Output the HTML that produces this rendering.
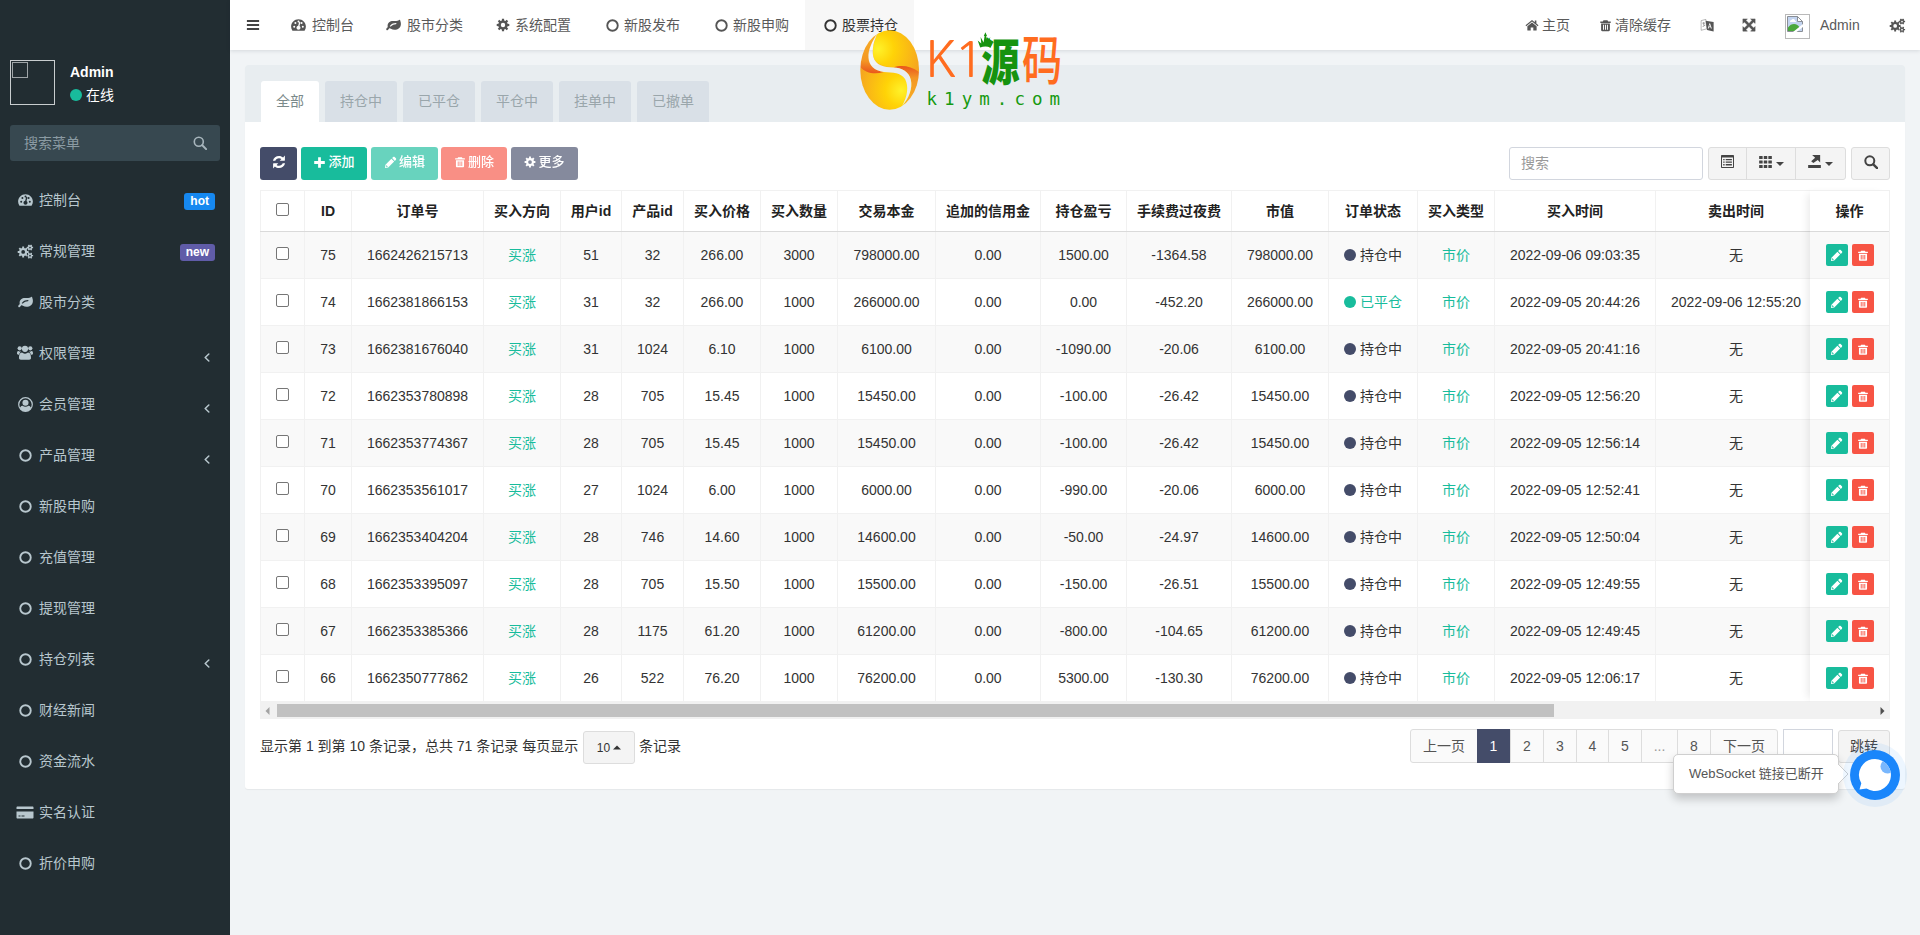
<!DOCTYPE html>
<html lang="zh-CN"><head><meta charset="utf-8"><title>股票持仓</title>
<style>
*{box-sizing:border-box;margin:0;padding:0}
html,body{width:1920px;height:935px;overflow:hidden}
body{position:relative;background:#f1f4f6;font-family:"Liberation Sans","Noto Sans CJK SC",sans-serif;font-size:14px;color:#333;line-height:20px}
svg{display:block}
.abs{position:absolute}
/* sidebar */
#sb{position:absolute;left:0;top:0;width:230px;height:935px;background:#222d32;color:#b8c7ce}
#sb .ava{position:absolute;left:10px;top:60px;width:45px;height:45px;border:1px solid #c9cdcf}
#sb .ava i{position:absolute;left:1px;top:1px;width:16px;height:16px;border:1px solid #9ea4a7;display:block}
#sb .uname{position:absolute;left:70px;top:62px;font-weight:bold;color:#fff;font-size:14px}
#sb .ustat{position:absolute;left:70px;top:85px;color:#fff;font-size:14px;display:flex;align-items:center}
#sb .ustat b{display:block;width:12px;height:12px;border-radius:6px;background:#18bc9c;margin-right:4px}
#sb .search{position:absolute;left:10px;top:125px;width:210px;height:36px;background:#374850;border-radius:3px;color:#8b9ba3;padding:8px 14px;font-size:14px}
#sb .search svg{position:absolute;right:13px;top:11px}
#sb .mi{position:absolute;left:0;width:230px;height:44px;font-size:14px;color:#b8c7ce}
#sb .mi .ico{position:absolute;left:15px;top:14px;width:20px;height:16px;display:flex;justify-content:center;align-items:center}
#sb .mi .tx{position:absolute;left:39px;top:12px;white-space:nowrap}
#sb .mi .bd{position:absolute;right:15px;top:15px;height:17px;line-height:17px;padding:0 6px;border-radius:3px;color:#fff;font-weight:bold;font-size:12px}
#sb .mi .ar{position:absolute;left:204px;top:22px}
/* header */
#hd{position:absolute;left:230px;top:0;width:1690px;height:50px;background:#fff;box-shadow:0 1px 4px rgba(0,21,41,.12)}
#hd .it{position:absolute;top:0;height:50px;display:flex;align-items:center;white-space:nowrap;color:#5a5a5a;font-size:14px}
#hd .it svg{margin-right:4px}
#hd .act{background:#f7f7f7;color:#333}
/* panel */
#pn{position:absolute;left:245px;top:65px;width:1660px;height:724px;background:#fff;border-radius:3px;box-shadow:0 1px 1px rgba(0,0,0,.05)}
#pn .ph{position:absolute;left:0;top:0;width:1660px;height:57px;background:#e8edf0;border-radius:3px 3px 0 0}
#pn .tab{position:absolute;top:16px;height:41px;line-height:41px;text-align:center;background:#d9e0e7;color:#9aa6ab;border-radius:3px 3px 0 0;font-size:14px}
#pn .tab.on{background:#fff;color:#7b8a8b}
#pn .btn{position:absolute;top:82px;height:33px;padding-bottom:3px;border-radius:3px;display:flex;align-items:center;justify-content:center;color:#fff;font-size:13px;white-space:nowrap}
#pn .btn span{margin-left:2px;font-weight:500}
.b-pri{background:#444c69}.b-suc{background:#18bc9c}.b-dan{background:#f75444}
.dis{opacity:.65}
#pn .sinp{position:absolute;left:1264px;top:82px;width:194px;height:33px;border:1px solid #d2d6de;border-radius:3px;padding:5px 11px;color:#999;font-size:14px;line-height:20px}
#pn .bgrp{position:absolute;left:1463px;top:82px;width:138px;height:33px;border:1px solid #ddd;border-radius:3px;background:#f4f4f4;display:flex}
#pn .bgrp>div{height:31px;padding-bottom:4px;border-right:1px solid #ddd;display:flex;align-items:center;justify-content:center}
#pn .bgrp>div svg+svg{margin-left:4px;margin-top:5px}
#pn .bsrch{padding-bottom:4px;position:absolute;left:1606px;top:82px;width:39px;height:33px;border:1px solid #ddd;border-radius:3px;background:#f4f4f4;display:flex;align-items:center;justify-content:center}
#pn .tw{position:absolute;left:15px;top:125px;width:1630px;height:512px;overflow:hidden}
table{border-collapse:collapse;table-layout:fixed;width:1556px;font-size:14px}
th,td{border:1px solid #f1f1f1;text-align:center;vertical-align:middle;white-space:nowrap;overflow:hidden;color:#333}
th{height:41px;font-weight:bold;border-bottom:1px solid #dadada;color:#222}
td{height:47px}
tbody tr:nth-child(odd) td{background:#f9f9f9}
td.g{color:#18bc9c}
.cb{display:inline-block;width:13px;height:13px;border:1px solid #767676;border-radius:2px;background:#fff;vertical-align:middle;margin-top:-5px}
.st{display:inline-flex;align-items:center}
.st b{display:block;width:12px;height:12px;border-radius:6px;margin-right:4px}
#pn .fx{position:absolute;left:1565px;top:125px;width:80px;height:512px;background:#fff;box-shadow:-6px 0 8px -4px rgba(0,0,0,.09);border-right:1px solid #f0f0f0}
#pn .fx .fh{height:42px;line-height:41px;text-align:center;font-weight:bold;border-top:1px solid #f0f0f0;border-bottom:1px solid #dadada;color:#222;padding-top:0}
#pn .fx .fr{height:47px;border-bottom:1px solid #f0f0f0;display:flex;align-items:center;justify-content:center}
#pn .fx .fr.od{background:#f9f9f9}
.ob{display:flex;width:22px;height:22px;border-radius:2px;align-items:center;justify-content:center;margin:0 2px}
#pn .hs{position:absolute;left:15px;top:637px;width:1630px;height:17px;background:#f1f1f1}
#pn .hs .thumb{position:absolute;left:17px;top:2px;width:1277px;height:13px;background:#c1c1c1}
#pn .pinfo{position:absolute;left:15px;top:671px;font-size:14px;line-height:20px;white-space:nowrap;color:#333}
#pn .psize{position:absolute;left:338px;top:666px;width:52px;height:33px;border:1px solid #ddd;border-radius:3px;background:#f4f4f4;display:flex;align-items:center;justify-content:center;font-size:12px;color:#333}
#pn .psize svg{margin-left:3px}
#pn .pgs{position:absolute;left:1165px;top:664px;height:34px;width:368px}
#pn .pg{position:absolute;top:0;height:34px;line-height:32px;border:1px solid #ddd;background:#fafafa;color:#555;text-align:center;font-size:14px}
#pn .pg.on{background:#444c69;border-color:#444c69;color:#fff;z-index:2}
#pn .pg.dd{color:#999}
#pn .jinp{position:absolute;left:1538px;top:664px;width:50px;height:34px;border:1px solid #d2d6de;background:#fff}
#pn .jbtn{position:absolute;left:1593px;top:665px;width:52px;height:33px;border:1px solid #ddd;border-radius:3px;background:#f4f4f4;text-align:center;line-height:31px;font-size:14px;color:#444}

</style></head>
<body>
<div id="sb">
<div class="ava"><i></i></div>
<div class="uname">Admin</div>
<div class="ustat"><b></b>在线</div>
<div class="search">搜索菜单<svg width="14" height="14" viewBox="0 0 14 14" style=""><g fill="none" stroke="#a7b5bc" stroke-width="1.6"><circle cx="5.800" cy="5.800" r="4.500"/><path stroke-linecap="round" d="M9.300 9.300l3.800 3.800" stroke-width="2.0"/></g></svg></div>
<div class="mi" style="top:178px"><span class="ico"><svg width="15" height="12" viewBox="0.500 1.700 15 11.900" style=""><path fill="#b8c7ce" fill-rule="evenodd" d="M8 1.8C3.9 1.8 .6 5.1 .6 9.2c0 1.4.4 2.8 1.2 4 .1.2.3.3.5.3h11.4c.2 0 .4-.1.5-.3.8-1.2 1.2-2.6 1.2-4 0-4.100-3.300-7.400-7.400-7.400zM3.700 10.300a1 1 0 1 1 0-2 1 1 0 0 1 0 2zM4.900 6.600a1 1 0 1 1 0-2 1 1 0 0 1 0 2zM8 5.200a1 1 0 1 1 0-2 1 1 0 0 1 0 2zM11.100 6.600a1 1 0 1 1 0-2 1 1 0 0 1 0 2zM12.300 10.300a1 1 0 1 1 0-2 1 1 0 0 1 0 2zM9.900 5.400l-.9 3.300c.6.3 1 .9 1 1.600 0 1.100-.9 2-2 2s-2-.9-2-2c0-1 .7-1.800 1.700-2l.9-3.300c.1-.3.400-.5.700-.4.400.1.600.4.500.8z"/></svg></span><span class="tx">控制台</span><span class="bd" style="background:#1688f0">hot</span></div>
<div class="mi" style="top:229px"><span class="ico"><svg width="17" height="15" viewBox="0 0 17 16" style=""><path fill="#b8c7ce" fill-rule="evenodd" d="M10.27 7.44 L11.81 7.50 L11.81 9.50 L10.27 9.56 L9.77 10.77 L10.82 11.90 L9.40 13.32 L8.27 12.27 L7.06 12.77 L7.00 14.31 L5.00 14.31 L4.94 12.77 L3.73 12.27 L2.60 13.32 L1.18 11.90 L2.23 10.77 L1.73 9.56 L0.19 9.50 L0.19 7.50 L1.73 7.44 L2.23 6.23 L1.18 5.10 L2.60 3.68 L3.73 4.73 L4.94 4.23 L5.00 2.69 L7.00 2.69 L7.06 4.23 L8.27 4.73 L9.40 3.68 L10.82 5.10 L9.77 6.23Z M8.00 8.50 A2.0 2.0 0 1 0 4.00 8.50 A2.0 2.0 0 1 0 8.00 8.50Z M15.57 3.03 L16.61 3.03 L16.61 4.57 L15.57 4.57 L15.10 5.39 L15.62 6.29 L14.29 7.05 L13.77 6.15 L12.83 6.15 L12.31 7.05 L10.98 6.29 L11.50 5.39 L11.03 4.57 L9.99 4.57 L9.99 3.03 L11.03 3.03 L11.50 2.21 L10.98 1.31 L12.31 0.55 L12.83 1.45 L13.77 1.45 L14.29 0.55 L15.62 1.31 L15.10 2.21Z M14.20 3.80 A0.9 0.9 0 1 0 12.40 3.80 A0.9 0.9 0 1 0 14.20 3.80Z M15.57 11.63 L16.61 11.63 L16.61 13.17 L15.57 13.17 L15.10 13.99 L15.62 14.89 L14.29 15.65 L13.77 14.75 L12.83 14.75 L12.31 15.65 L10.98 14.89 L11.50 13.99 L11.03 13.17 L9.99 13.17 L9.99 11.63 L11.03 11.63 L11.50 10.81 L10.98 9.91 L12.31 9.15 L12.83 10.05 L13.77 10.05 L14.29 9.15 L15.62 9.91 L15.10 10.81Z M14.20 12.40 A0.9 0.9 0 1 0 12.40 12.40 A0.9 0.9 0 1 0 14.20 12.40Z"/></svg></span><span class="tx">常规管理</span><span class="bd" style="background:#605ca8">new</span></div>
<div class="mi" style="top:280px"><span class="ico"><svg width="15" height="12" viewBox="0 1.800 16 12" style=""><path fill="#b8c7ce" fill-rule="evenodd" d="M15.300 3.500c.4 1 .6 2.100.6 3.100 0 3.800-3.200 6.300-6.900 6.300-1.400 0-2.600-.5-3.800-1.100-.4-.2-.9-.5-1.300-.5-.5 0-1 .8-1.400 1.300-.3.400-.6.700-1.100.7-.7 0-1.200-.6-1.200-1.100 0-.8 1.100-1.700 1.700-2.100-.1-.4-.2-.9-.2-1.400 0-3.200 2.600-5.200 5.600-5.200 1.200 0 2.400.1 3.600.1 1 0 2-.2 2.800-.8.300-.2.500-.5.900-.5.400 0 .6.800.7 1.200zM11.200 6.300c0-.3-.3-.6-.6-.6-2.300 0-4.300.9-6 2.500-.3.200-.5.400-.5.700 0 .3.300.6.600.6.300 0 .5-.2.700-.4 1.400-1.300 3.100-2.200 5.100-2.200.4 0 .7-.3.7-.6z"/></svg></span><span class="tx">股市分类</span></div>
<div class="mi" style="top:331px"><span class="ico" style="top:13px"><svg width="16" height="15" viewBox="0 0 16 15" style=""><g fill="#b8c7ce"><circle cx="8" cy="3.800" r="3.100"/><circle cx="2.700" cy="3.300" r="2.100"/><circle cx="13.300" cy="3.300" r="2.100"/><path d="M3.800 14.700c-1.100 0-1.800-.7-1.800-1.700 0-2.200.500-5.400 3-5.400.3 0 1.300 1.100 3 1.100s2.700-1.100 3-1.100c2.500 0 3 3.200 3 5.400 0 1-.7 1.700-1.800 1.700z"/><path d="M3.900 6.700c-.9.500-1.500 1.600-1.700 3.100H1.400C.5 9.800 0 9.400 0 8.600c0-1.200.300-2.500 1.200-2.500.3 0 .8.600 1.800.6.300 0 .6 0 .9-.100z"/><path d="M12.100 6.700c.9.500 1.500 1.600 1.700 3.100h.8c.9 0 1.400-.4 1.400-1.200 0-1.200-.3-2.500-1.200-2.500-.3 0-.8.600-1.800.6-.3 0-.6 0-.9-.100z"/></g></svg></span><span class="tx">权限管理</span><span class="ar"><svg width="6" height="9" viewBox="0 0 6 9" style=""><path fill="none" stroke="#b8c7ce" stroke-width="1.500" stroke-linecap="round" stroke-linejoin="round" d="M4.800 1L1.200 4.500 4.800 8"/></svg></span></div>
<div class="mi" style="top:382px"><span class="ico"><svg width="15" height="15" viewBox="0.600 0.600 14.800 14.800" style=""><clipPath id="ucp"><circle cx="8" cy="8" r="6.700"/></clipPath><circle cx="8" cy="8" r="6.700" fill="none" stroke="#b8c7ce" stroke-width="1.200"/><circle cx="8" cy="6.200" r="3" fill="#b8c7ce"/><path clip-path="url(#ucp)" fill="#b8c7ce" d="M1.800 15c0-3.800 1.600-5.700 3.400-5.700.7.600 1.700 1 2.800 1s2.100-.4 2.800-1c1.800 0 3.400 1.900 3.400 5.700z"/></svg></span><span class="tx">会员管理</span><span class="ar"><svg width="6" height="9" viewBox="0 0 6 9" style=""><path fill="none" stroke="#b8c7ce" stroke-width="1.500" stroke-linecap="round" stroke-linejoin="round" d="M4.800 1L1.200 4.500 4.800 8"/></svg></span></div>
<div class="mi" style="top:433px"><span class="ico"><svg width="15" height="15" viewBox="0 0 16 16" style=""><circle cx="8" cy="8" r="5.6" fill="none" stroke="#b8c7ce" stroke-width="2"/></svg></span><span class="tx">产品管理</span><span class="ar"><svg width="6" height="9" viewBox="0 0 6 9" style=""><path fill="none" stroke="#b8c7ce" stroke-width="1.500" stroke-linecap="round" stroke-linejoin="round" d="M4.800 1L1.200 4.500 4.800 8"/></svg></span></div>
<div class="mi" style="top:484px"><span class="ico"><svg width="15" height="15" viewBox="0 0 16 16" style=""><circle cx="8" cy="8" r="5.6" fill="none" stroke="#b8c7ce" stroke-width="2"/></svg></span><span class="tx">新股申购</span></div>
<div class="mi" style="top:535px"><span class="ico"><svg width="15" height="15" viewBox="0 0 16 16" style=""><circle cx="8" cy="8" r="5.6" fill="none" stroke="#b8c7ce" stroke-width="2"/></svg></span><span class="tx">充值管理</span></div>
<div class="mi" style="top:586px"><span class="ico"><svg width="15" height="15" viewBox="0 0 16 16" style=""><circle cx="8" cy="8" r="5.6" fill="none" stroke="#b8c7ce" stroke-width="2"/></svg></span><span class="tx">提现管理</span></div>
<div class="mi" style="top:637px"><span class="ico"><svg width="15" height="15" viewBox="0 0 16 16" style=""><circle cx="8" cy="8" r="5.6" fill="none" stroke="#b8c7ce" stroke-width="2"/></svg></span><span class="tx">持仓列表</span><span class="ar"><svg width="6" height="9" viewBox="0 0 6 9" style=""><path fill="none" stroke="#b8c7ce" stroke-width="1.500" stroke-linecap="round" stroke-linejoin="round" d="M4.800 1L1.200 4.500 4.800 8"/></svg></span></div>
<div class="mi" style="top:688px"><span class="ico"><svg width="15" height="15" viewBox="0 0 16 16" style=""><circle cx="8" cy="8" r="5.6" fill="none" stroke="#b8c7ce" stroke-width="2"/></svg></span><span class="tx">财经新闻</span></div>
<div class="mi" style="top:739px"><span class="ico"><svg width="15" height="15" viewBox="0 0 16 16" style=""><circle cx="8" cy="8" r="5.6" fill="none" stroke="#b8c7ce" stroke-width="2"/></svg></span><span class="tx">资金流水</span></div>
<div class="mi" style="top:790px"><span class="ico"><svg width="20" height="15" viewBox="0 0 18 15" style=""><path fill="#b8c7ce" fill-rule="evenodd" d="M1.500 1.500h15c.6 0 1 .4 1 1V4H.5V2.500c0-.6.400-1 1-1zM.5 6.500h17v6c0 .6-.4 1-1 1h-15c-.6 0-1-.4-1-1zM2.500 10.500v1h2v-1z M5.500 10.500v1h3v-1z"/></svg></span><span class="tx">实名认证</span></div>
<div class="mi" style="top:841px"><span class="ico"><svg width="15" height="15" viewBox="0 0 16 16" style=""><circle cx="8" cy="8" r="5.6" fill="none" stroke="#b8c7ce" stroke-width="2"/></svg></span><span class="tx">折价申购</span></div>
</div>
<div id="hd">
<div class="it" style="left:16px"><svg width="14" height="14" viewBox="0 0 16 16" style=""><g fill="#444"><rect x="1" y="2.3" width="14" height="2.3" rx=".3"/><rect x="1" y="6.85" width="14" height="2.3" rx=".3"/><rect x="1" y="11.4" width="14" height="2.3" rx=".3"/></g></svg></div>
<div class="it" style="left:61px"><svg width="15" height="12" viewBox="0.500 1.700 15 11.900" style=""><path fill="#555" fill-rule="evenodd" d="M8 1.8C3.9 1.8 .6 5.1 .6 9.2c0 1.4.4 2.8 1.2 4 .1.2.3.3.5.3h11.4c.2 0 .4-.1.5-.3.8-1.2 1.2-2.6 1.2-4 0-4.100-3.300-7.400-7.400-7.400zM3.700 10.300a1 1 0 1 1 0-2 1 1 0 0 1 0 2zM4.900 6.600a1 1 0 1 1 0-2 1 1 0 0 1 0 2zM8 5.200a1 1 0 1 1 0-2 1 1 0 0 1 0 2zM11.100 6.600a1 1 0 1 1 0-2 1 1 0 0 1 0 2zM12.300 10.300a1 1 0 1 1 0-2 1 1 0 0 1 0 2zM9.900 5.400l-.9 3.300c.6.3 1 .9 1 1.600 0 1.100-.9 2-2 2s-2-.9-2-2c0-1 .7-1.800 1.700-2l.9-3.300c.1-.3.400-.5.700-.4.400.1.600.4.500.8z"/></svg><span style="margin-left:2px">控制台</span></div>
<div class="it" style="left:156px"><svg width="15" height="12" viewBox="0 1.800 16 12" style=""><path fill="#555" fill-rule="evenodd" d="M15.300 3.500c.4 1 .6 2.100.6 3.100 0 3.800-3.200 6.300-6.900 6.300-1.400 0-2.600-.5-3.800-1.100-.4-.2-.9-.5-1.300-.5-.5 0-1 .8-1.400 1.300-.3.400-.6.700-1.100.7-.7 0-1.200-.6-1.200-1.100 0-.8 1.100-1.700 1.700-2.100-.1-.4-.2-.9-.2-1.400 0-3.200 2.600-5.200 5.600-5.200 1.200 0 2.400.1 3.600.1 1 0 2-.2 2.800-.8.300-.2.500-.5.900-.5.400 0 .6.800.7 1.200zM11.200 6.300c0-.3-.3-.6-.6-.6-2.300 0-4.300.9-6 2.500-.3.200-.5.400-.5.700 0 .3.300.6.600.6.300 0 .5-.2.700-.4 1.400-1.300 3.100-2.200 5.100-2.200.4 0 .7-.3.7-.6z"/></svg><span style="margin-left:2px">股市分类</span></div>
<div class="it" style="left:266px"><svg width="14" height="14" viewBox="0 0 16 16" style=""><path fill="#555" fill-rule="evenodd" d="M13.24 6.70 L15.19 6.76 L15.19 9.24 L13.24 9.30 L12.63 10.79 L13.96 12.21 L12.21 13.96 L10.79 12.63 L9.30 13.24 L9.24 15.19 L6.76 15.19 L6.70 13.24 L5.21 12.63 L3.79 13.96 L2.04 12.21 L3.37 10.79 L2.76 9.30 L0.81 9.24 L0.81 6.76 L2.76 6.70 L3.37 5.21 L2.04 3.79 L3.79 2.04 L5.21 3.37 L6.70 2.76 L6.76 0.81 L9.24 0.81 L9.30 2.76 L10.79 3.37 L12.21 2.04 L13.96 3.79 L12.63 5.21Z M10.50 8.00 A2.5 2.5 0 1 0 5.50 8.00 A2.5 2.5 0 1 0 10.50 8.00Z"/></svg><span style="margin-left:1px">系统配置</span></div>
<div class="it" style="left:375px"><svg width="15" height="15" viewBox="0 0 16 16" style=""><circle cx="8" cy="8" r="5.6" fill="none" stroke="#555" stroke-width="2"/></svg><span style="margin-left:0px">新股发布</span></div>
<div class="it" style="left:484px"><svg width="15" height="15" viewBox="0 0 16 16" style=""><circle cx="8" cy="8" r="5.6" fill="none" stroke="#555" stroke-width="2"/></svg><span style="margin-left:0px">新股申购</span></div>
<div class="it act" style="left:575px;width:109px;padding-left:18px"><svg width="15" height="15" viewBox="0 0 16 16" style=""><circle cx="8" cy="8" r="5.6" fill="none" stroke="#333" stroke-width="2"/></svg>股票持仓</div>
<div class="it" style="left:1295px"><svg width="14" height="14" viewBox="0 0 16 16" style=""><path fill="#555" d="M8 2.200L.6 8.300l.8 1 6.600-5.400 6.600 5.400.8-1-2.400-2V2.800h-1.800v2z M8 5.100l-5.300 4.400v4.400c0 .3.200.5.500.5h3.300v-3.600h3v3.600h3.300c.3 0 .5-.2.500-.5V9.500z"/></svg><span style="margin-left:-1px">主页</span></div>
<div class="it" style="left:1369px"><svg width="13" height="15" viewBox="0 0 16 16" style=""><path fill="#555" fill-rule="evenodd" d="M5.500 1.500h5l.8 1.500h2.700c.3 0 .5.200.5.500v.8c0 .3-.2.500-.5.500H2c-.3 0-.5-.2-.5-.5v-.8c0-.3.200-.5.500-.5h2.700zM2.600 5.600h10.800v8c0 .8-.6 1.400-1.400 1.400H4c-.8 0-1.400-.6-1.400-1.400zM5 7.200v6h1.200v-6z M7.400 7.200v6h1.200v-6z M9.800 7.200v6H11v-6z"/></svg><span style="margin-left:-1px">清除缓存</span></div>
<div class="it" style="left:1470px"><svg width="15" height="15" viewBox="0 0 16 16" style=""><path fill="none" stroke="#555" stroke-width=".8" opacity=".55" d="M1.200 2.800l5-1.300 1.200 10-6.200 1.600z"/><path fill="#555" d="M6 2.800l8.500 1.400v10.300L7.500 12.800z"/><path fill="#fff" d="M10.700 5.600l1.900 5.600h-1l-.4-1.300H9.600l-.4 1.300h-.9l1.800-5.600zm-.3 1.400l-.6 2.100h1.200z"/><path fill="#555" opacity=".7" d="M2.500 5h3v.8h-3z M3.600 4.200h.8v3.600h-.8z M2.600 9l2.800-2 .4.600-2.800 2z"/></svg></div>
<div class="it" style="left:1512px"><svg width="14" height="14" viewBox="0 0 16 16" style=""><path fill="#555" stroke="#555" stroke-width=".5" stroke-linejoin="round" d="M1 1h5.200L4.500 2.700 8 6.200l3.500-3.500L9.800 1H15v5.200l-1.700-1.700L9.800 8l3.500 3.500L15 9.800V15H9.800l1.700-1.700L8 9.800l-3.500 3.500L6.200 15H1V9.800l1.700 1.700L6.200 8 2.700 4.500 1 6.200z"/></svg></div>
<div class="abs" style="left:1555px;top:14px;width:25px;height:25px;border:1px solid #b9b9b9"></div>
<svg width="16" height="16" viewBox="0 0 16 16" class="abs" style="left:1557px;top:16px"><path d="M.5.5h10l5 5v10H.5z" fill="#c3d4f0" stroke="#8a8f96"/><path d="M10.500.5v5h5z" fill="#fff" stroke="#8a8f96" stroke-linejoin="round"/><path d="M3 5.500c0-.8.700-1.500 1.500-1.500.3-.7 1-1 1.700-1 1 0 1.800.700 1.800 1.700.6.100 1 .5 1 1 0 .2 0 .3-.1.400H3.200C3.100 5.900 3 5.700 3 5.500z" fill="#fff"/><path d="M1 15v-3.500C2.500 9 5 8 7 8c2.500 0 4.500 1.500 5.500 3.500L9 15z" fill="#4aa83c"/><path d="M6 16L16 8v3l-6.500 5z" fill="#fff"/></svg>
<div class="it" style="left:1590px">Admin</div>
<div class="it" style="left:1659px"><svg width="17" height="15" viewBox="0 0 17 16" style=""><path fill="#555" fill-rule="evenodd" d="M10.27 7.44 L11.81 7.50 L11.81 9.50 L10.27 9.56 L9.77 10.77 L10.82 11.90 L9.40 13.32 L8.27 12.27 L7.06 12.77 L7.00 14.31 L5.00 14.31 L4.94 12.77 L3.73 12.27 L2.60 13.32 L1.18 11.90 L2.23 10.77 L1.73 9.56 L0.19 9.50 L0.19 7.50 L1.73 7.44 L2.23 6.23 L1.18 5.10 L2.60 3.68 L3.73 4.73 L4.94 4.23 L5.00 2.69 L7.00 2.69 L7.06 4.23 L8.27 4.73 L9.40 3.68 L10.82 5.10 L9.77 6.23Z M8.00 8.50 A2.0 2.0 0 1 0 4.00 8.50 A2.0 2.0 0 1 0 8.00 8.50Z M15.57 3.03 L16.61 3.03 L16.61 4.57 L15.57 4.57 L15.10 5.39 L15.62 6.29 L14.29 7.05 L13.77 6.15 L12.83 6.15 L12.31 7.05 L10.98 6.29 L11.50 5.39 L11.03 4.57 L9.99 4.57 L9.99 3.03 L11.03 3.03 L11.50 2.21 L10.98 1.31 L12.31 0.55 L12.83 1.45 L13.77 1.45 L14.29 0.55 L15.62 1.31 L15.10 2.21Z M14.20 3.80 A0.9 0.9 0 1 0 12.40 3.80 A0.9 0.9 0 1 0 14.20 3.80Z M15.57 11.63 L16.61 11.63 L16.61 13.17 L15.57 13.17 L15.10 13.99 L15.62 14.89 L14.29 15.65 L13.77 14.75 L12.83 14.75 L12.31 15.65 L10.98 14.89 L11.50 13.99 L11.03 13.17 L9.99 13.17 L9.99 11.63 L11.03 11.63 L11.50 10.81 L10.98 9.91 L12.31 9.15 L12.83 10.05 L13.77 10.05 L14.29 9.15 L15.62 9.91 L15.10 10.81Z M14.20 12.40 A0.9 0.9 0 1 0 12.40 12.40 A0.9 0.9 0 1 0 14.20 12.40Z"/></svg></div>
</div>
<div id="pn">
<div class="ph">
<div class="tab on" style="left:16px;width:58px">全部</div>
<div class="tab" style="left:80px;width:72px">持仓中</div>
<div class="tab" style="left:158px;width:72px">已平仓</div>
<div class="tab" style="left:236px;width:72px">平仓中</div>
<div class="tab" style="left:314px;width:72px">挂单中</div>
<div class="tab" style="left:392px;width:72px">已撤单</div>
</div>
<div class="btn b-pri" style="left:15px;width:37px"><svg width="16" height="16" viewBox="0 0 16 16" style=""><path fill="#fff" d="M13.900 1.600v4.700c0 .3-.2.500-.5.500H8.700l1.700-1.700C9.800 4.500 8.900 4.200 8 4.200c-1.700 0-3.100 1-3.700 2.500H1.900C2.600 3.900 5 1.900 8 1.900c1.600 0 3 .6 4.100 1.600zM2.100 14.400V9.700c0-.3.200-.5.500-.5h4.700L5.600 10.900c.6.600 1.500.9 2.400.9 1.700 0 3.100-1 3.700-2.500h2.400c-.7 2.800-3.100 4.800-6.100 4.800-1.600 0-3-.6-4.100-1.600z"/></svg></div>
<div class="btn b-suc" style="left:56px;width:66px"><svg width="13" height="13" viewBox="0 0 16 16" style=""><path fill="#fff" d="M6.300 1.500h3.400v4.800h4.800v3.400H9.700v4.800H6.300V9.700H1.500V6.300h4.800z"/></svg><span>添加</span></div>
<div class="btn b-suc dis" style="left:126px;width:67px"><svg width="13" height="13" viewBox="0 0 16 16" style=""><path fill="#fff" fill-rule="evenodd" d="M11.300 1.300c.5-.5 1.300-.5 1.800 0l1.600 1.600c.5.500.5 1.300 0 1.800l-1.300 1.300-3.400-3.400z M9.100 3.500l3.400 3.400-7.300 7.300-4 .6.600-4z M2.900 11.200l-.3 1.800.4.400 1.800-.3z"/></svg><span>编辑</span></div>
<div class="btn b-dan dis" style="left:196px;width:66px"><svg width="12" height="14" viewBox="0 0 16 16" style=""><path fill="#fff" fill-rule="evenodd" d="M5.500 1.500h5l.8 1.500h2.700c.3 0 .5.200.5.500v.8c0 .3-.2.500-.5.500H2c-.3 0-.5-.2-.5-.5v-.8c0-.3.200-.5.500-.5h2.700zM2.600 5.600h10.800v8c0 .8-.6 1.400-1.400 1.400H4c-.8 0-1.400-.6-1.400-1.400zM5 7.200v6h1.200v-6z M7.400 7.200v6h1.200v-6z M9.800 7.200v6H11v-6z"/></svg><span>删除</span></div>
<div class="btn b-pri dis" style="left:266px;width:67px"><svg width="12" height="12" viewBox="0 0 16 16" style=""><path fill="#fff" fill-rule="evenodd" d="M13.24 6.70 L15.19 6.76 L15.19 9.24 L13.24 9.30 L12.63 10.79 L13.96 12.21 L12.21 13.96 L10.79 12.63 L9.30 13.24 L9.24 15.19 L6.76 15.19 L6.70 13.24 L5.21 12.63 L3.79 13.96 L2.04 12.21 L3.37 10.79 L2.76 9.30 L0.81 9.24 L0.81 6.76 L2.76 6.70 L3.37 5.21 L2.04 3.79 L3.79 2.04 L5.21 3.37 L6.70 2.76 L6.76 0.81 L9.24 0.81 L9.30 2.76 L10.79 3.37 L12.21 2.04 L13.96 3.79 L12.63 5.21Z M10.50 8.00 A2.5 2.5 0 1 0 5.50 8.00 A2.5 2.5 0 1 0 10.50 8.00Z"/></svg><span>更多</span></div>
<div class="sinp">搜索</div>
<div class="bgrp"><div style="width:38px"><svg width="13" height="13" viewBox="0 0 13 13" style=""><path fill="#444" fill-rule="evenodd" d="M.8 0h11.400c.5 0 .8.300.8.800v11.400c0 .5-.3.800-.8.800H.8c-.5 0-.8-.3-.8-.8V.8C0 .3.300 0 .8 0zM1 2.600v9.400h11V2.600zM2.200 3.900h1.400v1.300H2.200z M4.700 3.900h6.200v1.300H4.700zM2.200 6.500h1.400v1.300H2.200z M4.700 6.500h6.200v1.300H4.700zM2.200 9.100h1.400v1.300H2.200z M4.700 9.100h6.200v1.300H4.700z"/></svg></div><div style="width:49px"><svg width="13" height="12" viewBox="0 0 12.7 12" style=""><g fill="#444"><rect x="0.0" y="0.0" width="3.500" height="3" rx=".3"/><rect x="4.6" y="0.0" width="3.500" height="3" rx=".3"/><rect x="9.2" y="0.0" width="3.500" height="3" rx=".3"/><rect x="0.0" y="4.5" width="3.500" height="3" rx=".3"/><rect x="4.6" y="4.5" width="3.500" height="3" rx=".3"/><rect x="9.2" y="4.5" width="3.500" height="3" rx=".3"/><rect x="0.0" y="9.0" width="3.500" height="3" rx=".3"/><rect x="4.6" y="9.0" width="3.500" height="3" rx=".3"/><rect x="9.2" y="9.0" width="3.500" height="3" rx=".3"/></g></svg><svg width="8" height="4" viewBox="0 0 8 4" style=""><path fill="#444" d="M0 0h8L4 4z"/></svg></div><div style="width:49px;border-right:0"><svg width="13" height="13" viewBox="0 0 12.7 13" style=""><path fill="#444" d="M0 10h12.700v3H0zM4 0h8v7.500L9.600 5.100 5.200 7.900 3 6.200 7 2.700z"/></svg><svg width="8" height="4" viewBox="0 0 8 4" style=""><path fill="#444" d="M0 0h8L4 4z"/></svg></div></div>
<div class="bsrch"><svg width="14" height="14" viewBox="0 0 14 14" style=""><g fill="none" stroke="#444" stroke-width="2"><circle cx="5.800" cy="5.800" r="4.500"/><path stroke-linecap="round" d="M9.300 9.300l3.800 3.800" stroke-width="2.4"/></g></svg></div>
<div class="tw"><table><colgroup>
<col style="width:44px">
<col style="width:47px">
<col style="width:132px">
<col style="width:77px">
<col style="width:61px">
<col style="width:62px">
<col style="width:77px">
<col style="width:77px">
<col style="width:98px">
<col style="width:105px">
<col style="width:86px">
<col style="width:105px">
<col style="width:97px">
<col style="width:89px">
<col style="width:77px">
<col style="width:161px">
<col style="width:161px">
</colgroup><thead><tr>
<th><i class="cb" style="margin-top:-5px"></i></th>
<th>ID</th>
<th>订单号</th>
<th>买入方向</th>
<th>用户id</th>
<th>产品id</th>
<th>买入价格</th>
<th>买入数量</th>
<th>交易本金</th>
<th>追加的信用金</th>
<th>持仓盈亏</th>
<th>手续费过夜费</th>
<th>市值</th>
<th>订单状态</th>
<th>买入类型</th>
<th>买入时间</th>
<th>卖出时间</th>
</tr></thead><tbody>
<tr><td><i class="cb"></i></td><td>75</td><td>1662426215713</td><td class="g">买涨</td><td>51</td><td>32</td><td>266.00</td><td>3000</td><td>798000.00</td><td>0.00</td><td>1500.00</td><td>-1364.58</td><td>798000.00</td><td><span class="st"><b style="background:#444c69"></b>持仓中</span></td><td class="g">市价</td><td>2022-09-06 09:03:35</td><td>无</td></tr>
<tr><td><i class="cb"></i></td><td>74</td><td>1662381866153</td><td class="g">买涨</td><td>31</td><td>32</td><td>266.00</td><td>1000</td><td>266000.00</td><td>0.00</td><td>0.00</td><td>-452.20</td><td>266000.00</td><td><span class="st" style="color:#18bc9c"><b style="background:#18bc9c"></b>已平仓</span></td><td class="g">市价</td><td>2022-09-05 20:44:26</td><td>2022-09-06 12:55:20</td></tr>
<tr><td><i class="cb"></i></td><td>73</td><td>1662381676040</td><td class="g">买涨</td><td>31</td><td>1024</td><td>6.10</td><td>1000</td><td>6100.00</td><td>0.00</td><td>-1090.00</td><td>-20.06</td><td>6100.00</td><td><span class="st"><b style="background:#444c69"></b>持仓中</span></td><td class="g">市价</td><td>2022-09-05 20:41:16</td><td>无</td></tr>
<tr><td><i class="cb"></i></td><td>72</td><td>1662353780898</td><td class="g">买涨</td><td>28</td><td>705</td><td>15.45</td><td>1000</td><td>15450.00</td><td>0.00</td><td>-100.00</td><td>-26.42</td><td>15450.00</td><td><span class="st"><b style="background:#444c69"></b>持仓中</span></td><td class="g">市价</td><td>2022-09-05 12:56:20</td><td>无</td></tr>
<tr><td><i class="cb"></i></td><td>71</td><td>1662353774367</td><td class="g">买涨</td><td>28</td><td>705</td><td>15.45</td><td>1000</td><td>15450.00</td><td>0.00</td><td>-100.00</td><td>-26.42</td><td>15450.00</td><td><span class="st"><b style="background:#444c69"></b>持仓中</span></td><td class="g">市价</td><td>2022-09-05 12:56:14</td><td>无</td></tr>
<tr><td><i class="cb"></i></td><td>70</td><td>1662353561017</td><td class="g">买涨</td><td>27</td><td>1024</td><td>6.00</td><td>1000</td><td>6000.00</td><td>0.00</td><td>-990.00</td><td>-20.06</td><td>6000.00</td><td><span class="st"><b style="background:#444c69"></b>持仓中</span></td><td class="g">市价</td><td>2022-09-05 12:52:41</td><td>无</td></tr>
<tr><td><i class="cb"></i></td><td>69</td><td>1662353404204</td><td class="g">买涨</td><td>28</td><td>746</td><td>14.60</td><td>1000</td><td>14600.00</td><td>0.00</td><td>-50.00</td><td>-24.97</td><td>14600.00</td><td><span class="st"><b style="background:#444c69"></b>持仓中</span></td><td class="g">市价</td><td>2022-09-05 12:50:04</td><td>无</td></tr>
<tr><td><i class="cb"></i></td><td>68</td><td>1662353395097</td><td class="g">买涨</td><td>28</td><td>705</td><td>15.50</td><td>1000</td><td>15500.00</td><td>0.00</td><td>-150.00</td><td>-26.51</td><td>15500.00</td><td><span class="st"><b style="background:#444c69"></b>持仓中</span></td><td class="g">市价</td><td>2022-09-05 12:49:55</td><td>无</td></tr>
<tr><td><i class="cb"></i></td><td>67</td><td>1662353385366</td><td class="g">买涨</td><td>28</td><td>1175</td><td>61.20</td><td>1000</td><td>61200.00</td><td>0.00</td><td>-800.00</td><td>-104.65</td><td>61200.00</td><td><span class="st"><b style="background:#444c69"></b>持仓中</span></td><td class="g">市价</td><td>2022-09-05 12:49:45</td><td>无</td></tr>
<tr><td><i class="cb"></i></td><td>66</td><td>1662350777862</td><td class="g">买涨</td><td>26</td><td>522</td><td>76.20</td><td>1000</td><td>76200.00</td><td>0.00</td><td>5300.00</td><td>-130.30</td><td>76200.00</td><td><span class="st"><b style="background:#444c69"></b>持仓中</span></td><td class="g">市价</td><td>2022-09-05 12:06:17</td><td>无</td></tr>
</tbody></table></div>
<div class="fx"><div class="fh">操作</div>
<div class="fr od"><span class="ob" style="background:#18bc9c"><svg width="13" height="13" viewBox="0 0 16 16" style=""><path fill="#fff" fill-rule="evenodd" d="M11.300 1.300c.5-.5 1.300-.5 1.800 0l1.600 1.600c.5.500.5 1.300 0 1.800l-1.300 1.300-3.400-3.400z M9.100 3.500l3.400 3.400-7.300 7.300-4 .6.600-4z M2.900 11.200l-.3 1.800.4.400 1.800-.3z"/></svg></span><span class="ob" style="background:#f75444"><svg width="12" height="13" viewBox="0 0 16 16" style=""><path fill="#fff" fill-rule="evenodd" d="M5.500 1.500h5l.8 1.500h2.700c.3 0 .5.200.5.500v.8c0 .3-.2.500-.5.500H2c-.3 0-.5-.2-.5-.5v-.8c0-.3.200-.5.500-.5h2.700zM2.600 5.600h10.800v8c0 .8-.6 1.400-1.400 1.400H4c-.8 0-1.400-.6-1.400-1.400zM5 7.200v6h1.200v-6z M7.400 7.200v6h1.200v-6z M9.800 7.200v6H11v-6z"/></svg></span></div>
<div class="fr"><span class="ob" style="background:#18bc9c"><svg width="13" height="13" viewBox="0 0 16 16" style=""><path fill="#fff" fill-rule="evenodd" d="M11.300 1.300c.5-.5 1.300-.5 1.800 0l1.600 1.600c.5.500.5 1.300 0 1.800l-1.300 1.300-3.400-3.400z M9.100 3.500l3.400 3.400-7.300 7.300-4 .6.600-4z M2.900 11.200l-.3 1.800.4.400 1.800-.3z"/></svg></span><span class="ob" style="background:#f75444"><svg width="12" height="13" viewBox="0 0 16 16" style=""><path fill="#fff" fill-rule="evenodd" d="M5.500 1.500h5l.8 1.500h2.700c.3 0 .5.200.5.500v.8c0 .3-.2.500-.5.500H2c-.3 0-.5-.2-.5-.5v-.8c0-.3.200-.5.500-.5h2.700zM2.600 5.600h10.800v8c0 .8-.6 1.400-1.400 1.400H4c-.8 0-1.400-.6-1.400-1.400zM5 7.200v6h1.200v-6z M7.400 7.200v6h1.200v-6z M9.800 7.200v6H11v-6z"/></svg></span></div>
<div class="fr od"><span class="ob" style="background:#18bc9c"><svg width="13" height="13" viewBox="0 0 16 16" style=""><path fill="#fff" fill-rule="evenodd" d="M11.300 1.300c.5-.5 1.300-.5 1.800 0l1.600 1.600c.5.500.5 1.300 0 1.800l-1.300 1.300-3.400-3.400z M9.100 3.500l3.400 3.400-7.300 7.300-4 .6.600-4z M2.900 11.200l-.3 1.800.4.400 1.800-.3z"/></svg></span><span class="ob" style="background:#f75444"><svg width="12" height="13" viewBox="0 0 16 16" style=""><path fill="#fff" fill-rule="evenodd" d="M5.500 1.500h5l.8 1.500h2.700c.3 0 .5.200.5.500v.8c0 .3-.2.500-.5.500H2c-.3 0-.5-.2-.5-.5v-.8c0-.3.200-.5.500-.5h2.700zM2.600 5.600h10.800v8c0 .8-.6 1.400-1.400 1.400H4c-.8 0-1.400-.6-1.400-1.400zM5 7.200v6h1.200v-6z M7.400 7.200v6h1.200v-6z M9.800 7.200v6H11v-6z"/></svg></span></div>
<div class="fr"><span class="ob" style="background:#18bc9c"><svg width="13" height="13" viewBox="0 0 16 16" style=""><path fill="#fff" fill-rule="evenodd" d="M11.300 1.300c.5-.5 1.300-.5 1.800 0l1.600 1.600c.5.500.5 1.300 0 1.800l-1.300 1.300-3.400-3.400z M9.100 3.500l3.400 3.400-7.300 7.300-4 .6.600-4z M2.900 11.200l-.3 1.800.4.400 1.800-.3z"/></svg></span><span class="ob" style="background:#f75444"><svg width="12" height="13" viewBox="0 0 16 16" style=""><path fill="#fff" fill-rule="evenodd" d="M5.500 1.500h5l.8 1.500h2.700c.3 0 .5.200.5.500v.8c0 .3-.2.500-.5.500H2c-.3 0-.5-.2-.5-.5v-.8c0-.3.200-.5.500-.5h2.700zM2.600 5.600h10.800v8c0 .8-.6 1.400-1.400 1.400H4c-.8 0-1.400-.6-1.400-1.400zM5 7.200v6h1.200v-6z M7.400 7.200v6h1.200v-6z M9.800 7.200v6H11v-6z"/></svg></span></div>
<div class="fr od"><span class="ob" style="background:#18bc9c"><svg width="13" height="13" viewBox="0 0 16 16" style=""><path fill="#fff" fill-rule="evenodd" d="M11.300 1.300c.5-.5 1.300-.5 1.800 0l1.600 1.600c.5.500.5 1.300 0 1.800l-1.300 1.300-3.400-3.400z M9.100 3.500l3.400 3.400-7.300 7.300-4 .6.600-4z M2.900 11.200l-.3 1.800.4.400 1.800-.3z"/></svg></span><span class="ob" style="background:#f75444"><svg width="12" height="13" viewBox="0 0 16 16" style=""><path fill="#fff" fill-rule="evenodd" d="M5.500 1.500h5l.8 1.500h2.700c.3 0 .5.200.5.500v.8c0 .3-.2.500-.5.500H2c-.3 0-.5-.2-.5-.5v-.8c0-.3.200-.5.500-.5h2.700zM2.600 5.600h10.800v8c0 .8-.6 1.400-1.400 1.400H4c-.8 0-1.400-.6-1.400-1.400zM5 7.200v6h1.200v-6z M7.400 7.200v6h1.200v-6z M9.800 7.200v6H11v-6z"/></svg></span></div>
<div class="fr"><span class="ob" style="background:#18bc9c"><svg width="13" height="13" viewBox="0 0 16 16" style=""><path fill="#fff" fill-rule="evenodd" d="M11.300 1.300c.5-.5 1.300-.5 1.800 0l1.600 1.600c.5.500.5 1.300 0 1.800l-1.300 1.300-3.400-3.400z M9.100 3.500l3.400 3.400-7.300 7.300-4 .6.600-4z M2.900 11.200l-.3 1.800.4.400 1.800-.3z"/></svg></span><span class="ob" style="background:#f75444"><svg width="12" height="13" viewBox="0 0 16 16" style=""><path fill="#fff" fill-rule="evenodd" d="M5.500 1.500h5l.8 1.500h2.700c.3 0 .5.200.5.500v.8c0 .3-.2.500-.5.500H2c-.3 0-.5-.2-.5-.5v-.8c0-.3.200-.5.500-.5h2.700zM2.600 5.600h10.800v8c0 .8-.6 1.400-1.400 1.400H4c-.8 0-1.400-.6-1.400-1.400zM5 7.200v6h1.200v-6z M7.400 7.200v6h1.200v-6z M9.800 7.200v6H11v-6z"/></svg></span></div>
<div class="fr od"><span class="ob" style="background:#18bc9c"><svg width="13" height="13" viewBox="0 0 16 16" style=""><path fill="#fff" fill-rule="evenodd" d="M11.300 1.300c.5-.5 1.300-.5 1.800 0l1.600 1.600c.5.500.5 1.300 0 1.800l-1.300 1.300-3.400-3.400z M9.100 3.500l3.400 3.400-7.300 7.300-4 .6.600-4z M2.900 11.200l-.3 1.800.4.400 1.800-.3z"/></svg></span><span class="ob" style="background:#f75444"><svg width="12" height="13" viewBox="0 0 16 16" style=""><path fill="#fff" fill-rule="evenodd" d="M5.500 1.500h5l.8 1.500h2.700c.3 0 .5.200.5.500v.8c0 .3-.2.500-.5.500H2c-.3 0-.5-.2-.5-.5v-.8c0-.3.200-.5.500-.5h2.700zM2.600 5.600h10.800v8c0 .8-.6 1.400-1.400 1.400H4c-.8 0-1.400-.6-1.400-1.400zM5 7.200v6h1.200v-6z M7.400 7.200v6h1.200v-6z M9.800 7.200v6H11v-6z"/></svg></span></div>
<div class="fr"><span class="ob" style="background:#18bc9c"><svg width="13" height="13" viewBox="0 0 16 16" style=""><path fill="#fff" fill-rule="evenodd" d="M11.300 1.300c.5-.5 1.300-.5 1.800 0l1.600 1.600c.5.500.5 1.300 0 1.800l-1.300 1.300-3.400-3.400z M9.100 3.500l3.400 3.400-7.300 7.300-4 .6.600-4z M2.900 11.200l-.3 1.800.4.400 1.800-.3z"/></svg></span><span class="ob" style="background:#f75444"><svg width="12" height="13" viewBox="0 0 16 16" style=""><path fill="#fff" fill-rule="evenodd" d="M5.500 1.500h5l.8 1.500h2.700c.3 0 .5.200.5.500v.8c0 .3-.2.500-.5.500H2c-.3 0-.5-.2-.5-.5v-.8c0-.3.200-.5.500-.5h2.700zM2.600 5.600h10.800v8c0 .8-.6 1.400-1.400 1.400H4c-.8 0-1.400-.6-1.400-1.400zM5 7.200v6h1.200v-6z M7.400 7.200v6h1.200v-6z M9.800 7.200v6H11v-6z"/></svg></span></div>
<div class="fr od"><span class="ob" style="background:#18bc9c"><svg width="13" height="13" viewBox="0 0 16 16" style=""><path fill="#fff" fill-rule="evenodd" d="M11.300 1.300c.5-.5 1.300-.5 1.800 0l1.600 1.600c.5.500.5 1.300 0 1.800l-1.300 1.300-3.400-3.400z M9.100 3.500l3.400 3.400-7.300 7.300-4 .6.600-4z M2.900 11.200l-.3 1.800.4.400 1.800-.3z"/></svg></span><span class="ob" style="background:#f75444"><svg width="12" height="13" viewBox="0 0 16 16" style=""><path fill="#fff" fill-rule="evenodd" d="M5.500 1.500h5l.8 1.500h2.700c.3 0 .5.200.5.500v.8c0 .3-.2.500-.5.500H2c-.3 0-.5-.2-.5-.5v-.8c0-.3.200-.5.500-.5h2.700zM2.600 5.600h10.800v8c0 .8-.6 1.400-1.400 1.400H4c-.8 0-1.400-.6-1.400-1.400zM5 7.200v6h1.200v-6z M7.400 7.200v6h1.200v-6z M9.800 7.200v6H11v-6z"/></svg></span></div>
<div class="fr"><span class="ob" style="background:#18bc9c"><svg width="13" height="13" viewBox="0 0 16 16" style=""><path fill="#fff" fill-rule="evenodd" d="M11.300 1.300c.5-.5 1.300-.5 1.800 0l1.600 1.600c.5.500.5 1.300 0 1.800l-1.300 1.300-3.400-3.400z M9.100 3.500l3.400 3.400-7.300 7.300-4 .6.600-4z M2.900 11.200l-.3 1.800.4.400 1.800-.3z"/></svg></span><span class="ob" style="background:#f75444"><svg width="12" height="13" viewBox="0 0 16 16" style=""><path fill="#fff" fill-rule="evenodd" d="M5.500 1.500h5l.8 1.500h2.700c.3 0 .5.200.5.500v.8c0 .3-.2.500-.5.500H2c-.3 0-.5-.2-.5-.5v-.8c0-.3.200-.5.500-.5h2.700zM2.600 5.600h10.800v8c0 .8-.6 1.400-1.400 1.400H4c-.8 0-1.400-.6-1.400-1.400zM5 7.200v6h1.200v-6z M7.400 7.200v6h1.200v-6z M9.800 7.200v6H11v-6z"/></svg></span></div>
</div>
<div class="hs"><div class="thumb"></div><svg class="abs" style="left:5px;top:4.500px" width="5" height="8" viewBox="0 0 5 8"><path d="M4.500 0v8L.5 4z" fill="#a3a3a3"/></svg><svg class="abs" style="right:5px;top:4.500px" width="5" height="8" viewBox="0 0 5 8"><path d="M.5 0v8l4-4z" fill="#505050"/></svg></div>
<div class="pinfo">显示第 1 到第 10 条记录，总共 71 条记录 每页显示</div>
<div class="psize">10<svg width="8" height="5" viewBox="0 0 8 4" style=""><path fill="#333" d="M0 4l4-4 4 4z"/></svg></div>
<div class="pinfo" style="left:394px">条记录</div>
<div class="pgs">
<div class="pg" style="left:0px;width:68px;border-radius:3px 0 0 3px">上一页</div>
<div class="pg on" style="left:67px;width:33px">1</div>
<div class="pg" style="left:100px;width:34px">2</div>
<div class="pg" style="left:133px;width:34px">3</div>
<div class="pg" style="left:166px;width:33px">4</div>
<div class="pg" style="left:198px;width:34px">5</div>
<div class="pg dd" style="left:231px;width:37px">...</div>
<div class="pg" style="left:267px;width:34px">8</div>
<div class="pg" style="left:300px;width:68px;border-radius:0 3px 3px 0">下一页</div>
</div>
<div class="jinp"></div><div class="jbtn">跳转</div>
</div>
<svg class="abs" style="left:855px;top:25px;z-index:50" width="70" height="90" viewBox="0 0 727 935"><defs><radialGradient id="gA" gradientUnits="userSpaceOnUse" cx="240" cy="250" r="470"><stop offset="0" stop-color="#fff22a"/><stop offset=".35" stop-color="#ffd307"/><stop offset="1" stop-color="#f5a321"/></radialGradient><radialGradient id="gB" gradientUnits="userSpaceOnUse" cx="480" cy="680" r="470"><stop offset="0" stop-color="#fff22a"/><stop offset=".35" stop-color="#ffd307"/><stop offset="1" stop-color="#f5a321"/></radialGradient><linearGradient id="gL" gradientUnits="userSpaceOnUse" x1="200" y1="100" x2="170" y2="500"><stop offset="0" stop-color="#f9b024"/><stop offset=".7" stop-color="#f39624"/><stop offset="1" stop-color="#ea561c"/></linearGradient><linearGradient id="gR" gradientUnits="userSpaceOnUse" x1="560" y1="430" x2="560" y2="830"><stop offset="0" stop-color="#ea561c"/><stop offset=".3" stop-color="#f39624"/><stop offset="1" stop-color="#f9b024"/></linearGradient><clipPath id="egg"><ellipse cx="360" cy="467" rx="305" ry="413"/></clipPath><mask id="band" maskUnits="userSpaceOnUse" x="0" y="0" width="727" height="935"><rect width="727" height="935" fill="#fff"/><path fill="#000" d="M235 85C175 170 135 260 140 340C145 420 200 475 300 488C400 498 470 490 520 560C560 640 545 740 490 840C560 760 600 660 580 570C560 480 480 445 400 442C300 440 215 420 190 330C175 250 195 160 235 85Z"/></mask></defs><g clip-path="url(#egg)" mask="url(#band)"><rect width="727" height="935" fill="url(#gB)"/><path fill="url(#gA)" d="M150 0H727V560C640 470 560 425 440 432C330 440 215 420 190 330C175 250 195 160 235 85Z"/><path fill="url(#gL)" d="M240 75C175 170 135 260 140 340C145 420 200 475 300 488C200 520 100 500 40 420L0 300V0H240Z"/><path fill="url(#gR)" d="M400 442C480 412 590 425 680 500L727 700L490 850C560 760 600 660 580 570C560 480 480 445 400 442Z"/></g></svg>
<svg class="abs" style="left:925px;top:25px;z-index:50;overflow:visible" width="140" height="90" viewBox="0 0 140 90"><text x="0" y="0" transform="translate(-0.35,52.00) scale(0.990,0.990)" font-family="NanumGothic,sans-serif" font-weight="400" font-size="50" fill="#ff6c1f">K</text><text x="0" y="0" transform="translate(28.60,51.74) scale(1.043,0.985)" font-family="NanumGothic,sans-serif" font-weight="400" font-size="50" fill="#ff6c1f">1</text><text x="0" y="0" transform="translate(56.14,54.90) scale(0.767,1.010)" font-family="Noto Sans CJK SC,sans-serif" font-weight="900" font-size="50" fill="#16930f">源</text><text x="0" y="0" transform="translate(96.99,54.88) scale(0.804,1.079)" font-family="Noto Sans CJK SC,sans-serif" font-weight="500" font-size="50" fill="#ff6c1f">码</text><path fill="#16930f" d="M55.200 22.600L52.700 15.500L56.300 18.600L55.600 12L58.600 17.500L59.600 11L58.800 11L60.400 7.200L62 11L61.200 11L62.200 17.500L65.200 12L64.500 18.600L68.100 15.500L65.600 22.600Q60.400 20.600 55.200 22.600Z"/><text x="1.500" y="79.600" font-family="DejaVu Sans Mono,Liberation Mono,monospace" font-size="17.500" letter-spacing="7.050" fill="#169a10">k1ym.com</text></svg>
<div class="abs" style="left:1673px;top:754px;width:166px;height:40px;background:#fff;border:1px solid #cfcfcf;border-radius:5px;box-shadow:0 5px 10px rgba(0,0,0,.2);z-index:60;font-size:13px;line-height:38px;color:#555;padding-left:15px;white-space:nowrap">WebSocket 链接已断开</div>
<svg class="abs" style="left:1838px;top:764px;z-index:61" width="11" height="20" viewBox="0 0 11 20"><path d="M0 0L10 10L0 20Z" fill="#fff"/><path d="M0 0L10 10L0 20" fill="none" stroke="#cfcfcf"/></svg>
<svg class="abs" style="left:1841px;top:741px;z-index:62" width="68" height="68" viewBox="0 0 68 68"><circle cx="34" cy="34" r="32" fill="#1a86fb" opacity=".08"/><circle cx="34" cy="34" r="25" fill="#1a86fb"/><clipPath id="bub"><path d="M34 18a16 16 0 1 1-8.500 29.600L18.500 48.500l1.800-6.300A16 16 0 0 1 34 18z"/></clipPath><path d="M34 18a16 16 0 1 1-8.500 29.600L18.500 48.500l1.800-6.300A16 16 0 0 1 34 18z" fill="#fff"/><circle cx="46.500" cy="25.500" r="7" fill="#79b7fd" clip-path="url(#bub)"/></svg>
</body></html>
